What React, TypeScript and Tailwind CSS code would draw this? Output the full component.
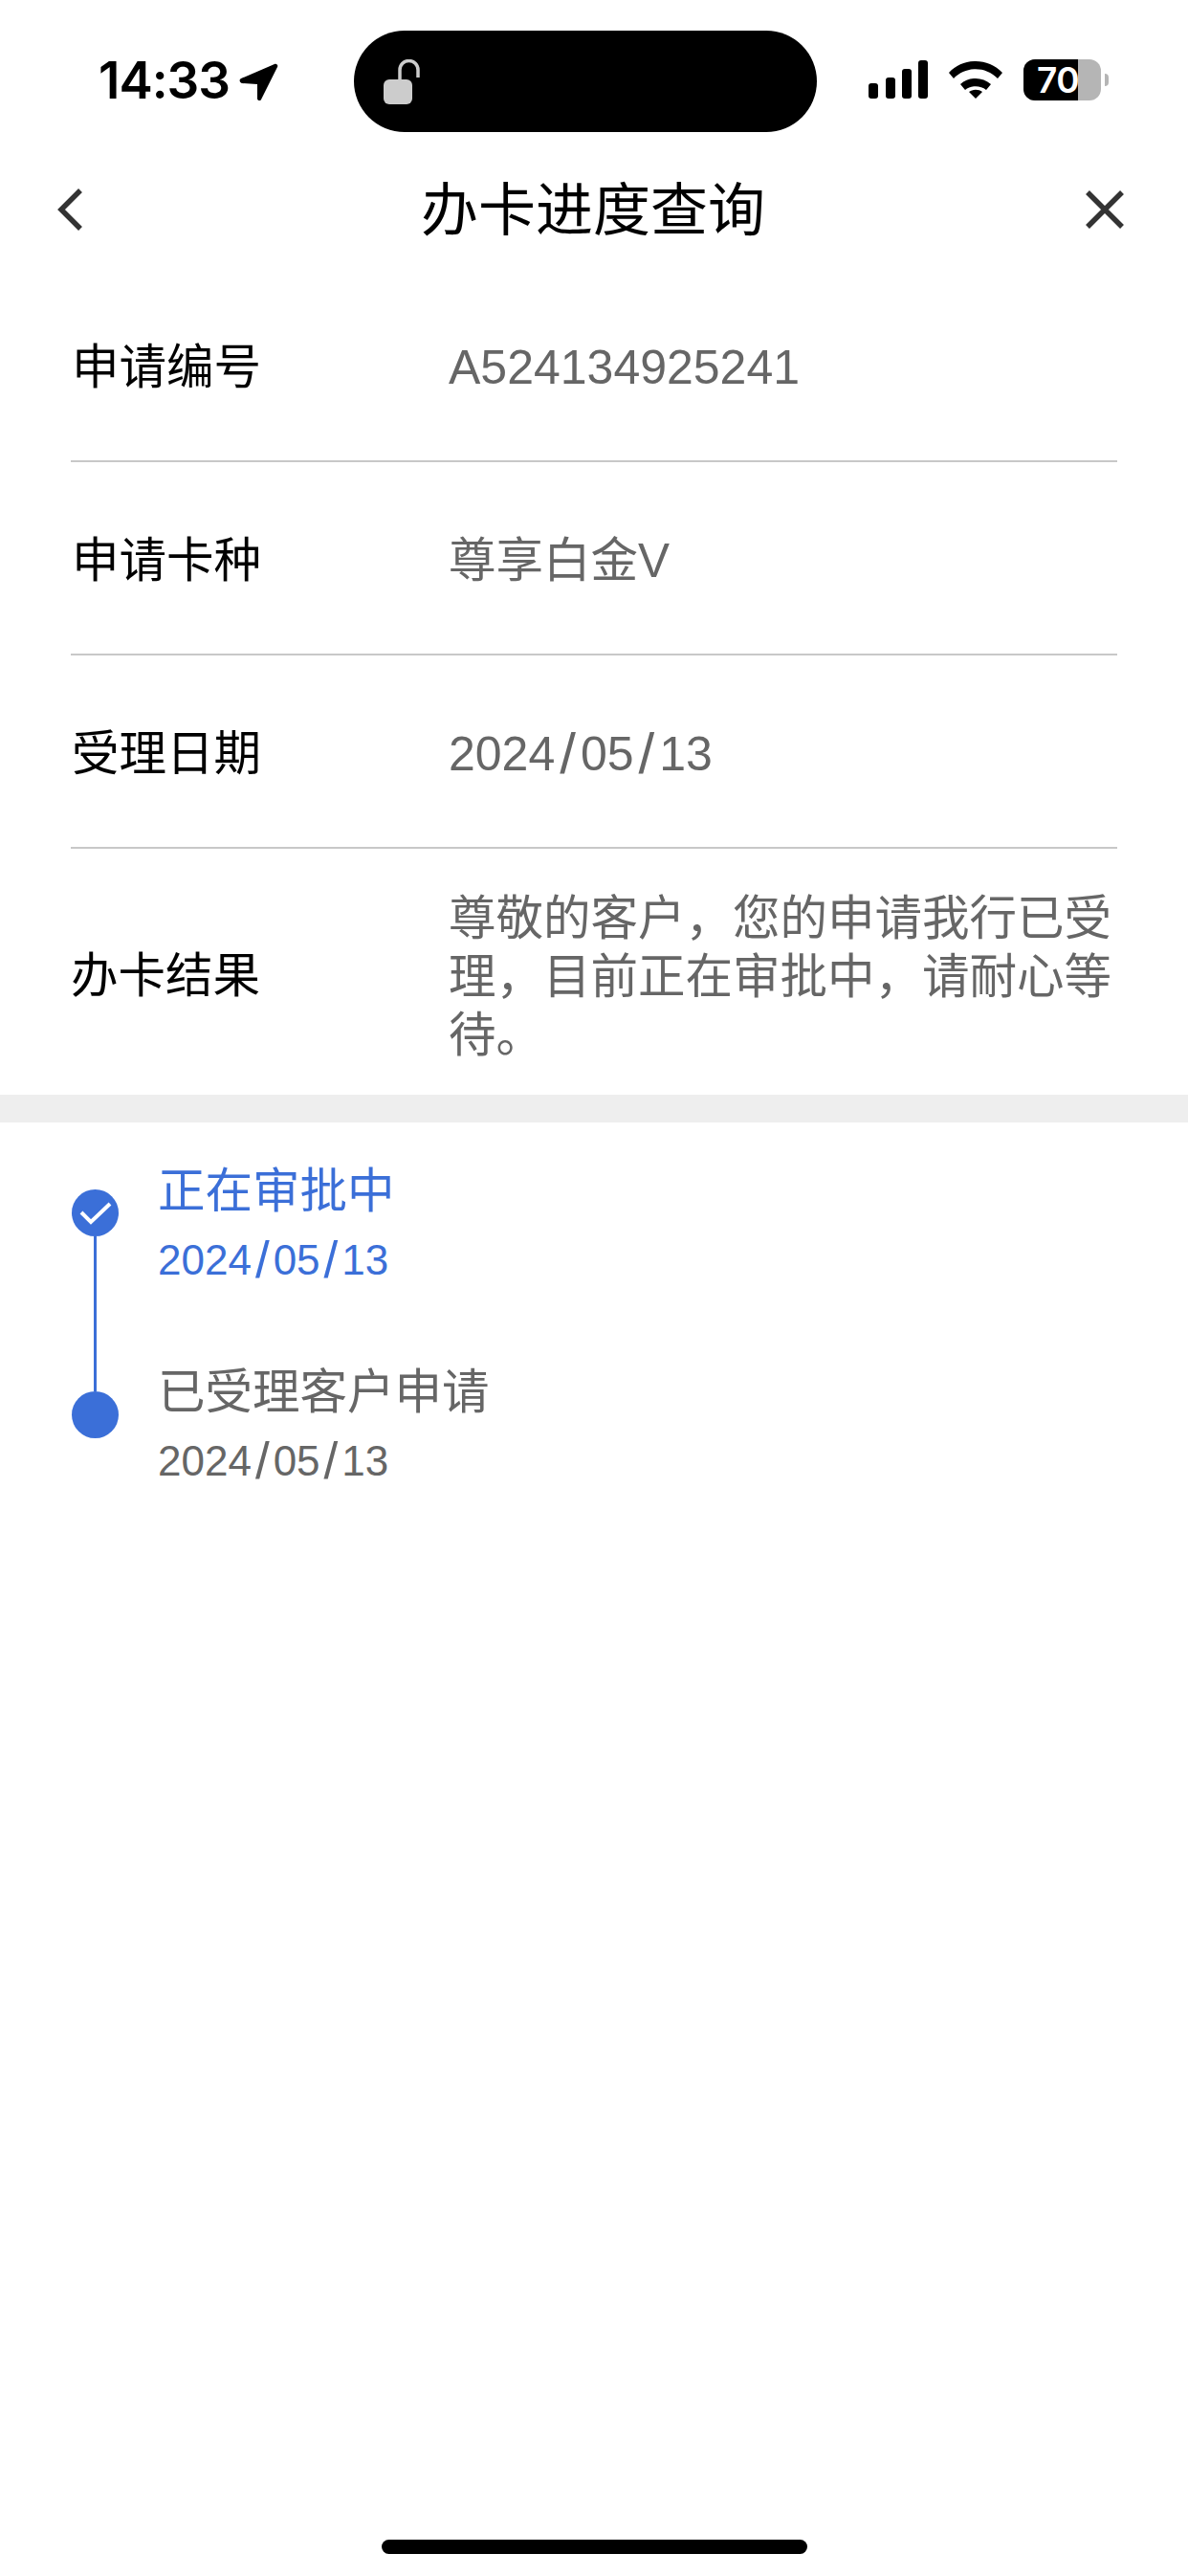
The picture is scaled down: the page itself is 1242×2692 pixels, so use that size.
import type { ReactNode } from "react";

const SANS = '"Liberation Sans","Noto Sans CJK SC",sans-serif';

function DateText({ slash }: { slash: string }) {
  return (
    <>
      2024<span className={slash}>/</span>05<span className={slash}>/</span>13
    </>
  );
}

function Row({ label, children, size = "text-[49.5px]" }: { label: string; children: ReactNode; size?: string }) {
  return (
    <div className="mx-[74px] flex h-[202px] items-center border-b-2 border-[#c8c8c8] pt-[7px]">
      <div className="w-[395px] shrink-0 pl-[1px] text-[49.5px] text-black">{label}</div>
      <div className={`${size} text-[#666666]`}>{children}</div>
    </div>
  );
}

export default function App() {
  return (
    <div className="flex h-[2692px] w-[1242px] flex-col overflow-hidden bg-white" style={{ fontFamily: SANS }}>
      <div className="flex h-[138px] items-start pl-[103px] pt-[32px]">
        <div className="flex h-[106px] items-center">
          <span className="w-[147px] font-['Inter'] text-[53px] font-semibold tracking-[-1px] text-black">14:33</span>
          <svg width="41" height="39" viewBox="0 0 41 39" className="shrink-0">
            <path d="M37 1 2 16c-2 1-2 4 1 5l16 1v15c0 2 3 3 4 1L40 4c1-2-1-4-3-3Z" fill="#000" />
          </svg>
          <div className="ml-[79px] flex h-[106px] w-[484px] shrink-0 items-center rounded-[53px] bg-black pl-[31px]">
            <svg width="38" height="47" viewBox="0 0 38 47">
              <rect x="0" y="21" width="30" height="26" rx="6" fill="#cccccc" />
              <path d="M17 21V11a9 9 0 0 1 19 0v8" fill="none" stroke="#cccccc" strokeWidth="3.5" />
            </svg>
          </div>
          <svg width="62" height="40" viewBox="0 0 62 40" className="mb-[4px] ml-[54px] shrink-0">
            <rect x="0" y="24" width="10" height="16" rx="3" fill="#000" />
            <rect x="18" y="18" width="10" height="22" rx="3" fill="#000" />
            <rect x="35" y="9" width="10" height="31" rx="3" fill="#000" />
            <rect x="52" y="0" width="10" height="40" rx="3" fill="#000" />
          </svg>
          <svg width="56" height="40" viewBox="0 0 56 40" className="mb-[4px] ml-[22px] shrink-0">
            <path d="M0 13C15-3 41-3 56 13l-5 6C38 6 18 6 5 19Z" fill="#000" />
            <path d="M12 25c9-8 23-8 32 0l-5 6c-6-5-16-5-22 0Z" fill="#000" />
            <path d="M28 40 21 33c4-3 10-3 14 0Z" fill="#000" />
          </svg>
          <div className="mb-[4px] ml-[22px] flex shrink-0 items-center">
            <div className="relative flex h-[43px] w-[81px] items-center overflow-hidden rounded-[12px] bg-[#b5b5b5]">
              <div className="h-full w-[57px] bg-black" />
              <span className="absolute left-[14px] top-0 font-['Inter'] text-[37px] font-semibold leading-[43px] tracking-[-0.5px] text-white">70</span>
            </div>
            <div className="ml-[4px] h-[13px] w-[4px] rounded-r-full bg-[#b5b5b5]" />
          </div>
        </div>
      </div>
      <div className="flex h-[143px] items-center justify-between pl-[60px] pr-[67px] pt-[22px]">
        <div className="w-[45px]">
          <svg width="26" height="44" viewBox="0 0 26 44" className="mt-[-3px]">
            <path d="M24 2 4 22l20 20" fill="none" stroke="#333333" strokeWidth="5.5" />
          </svg>
        </div>
        <span className="text-[60px] leading-none text-black">办卡进度查询</span>
        <div className="w-[40px]">
          <svg width="40" height="40" viewBox="0 0 40 40" className="mt-[-3px]">
            <path d="M2 2l36 36M38 2 2 38" fill="none" stroke="#333333" strokeWidth="5.5" />
          </svg>
        </div>
      </div>
      <Row label="申请编号" size="text-[50px]">A524134925241</Row>
      <Row label="申请卡种">尊享白金V</Row>
      <Row label="受理日期" size="text-[50px]">
        <DateText slash="mx-[5px] inline-block translate-y-[3px] text-[60px] leading-none" />
      </Row>
      <div className="mx-[74px] flex h-[257px] items-center pt-[9px]">
        <div className="w-[395px] shrink-0 text-[49.5px] text-black">办卡结果</div>
        <div className="text-[49.5px] leading-[61px] text-[#666666]">尊敬的客户，您的申请我行已受理，目前正在审批中，请耐心等待。</div>
      </div>
      <div className="h-[29px] bg-[#eeeeee]" />
      <div className="flex pl-[75px] pt-[42px]">
        <div className="mt-[28px] flex w-[49px] flex-col items-center">
          <div className="flex h-[49px] w-[49px] items-center justify-center rounded-full bg-[#3b6fd8]">
            <svg width="34" height="24" viewBox="0 0 34 24">
              <path d="M2 11l10 10L32 2" fill="none" stroke="#fff" strokeWidth="4" />
            </svg>
          </div>
          <div className="h-[162px] w-[3px] bg-[#3b6fd8]" />
          <div className="h-[49px] w-[49px] rounded-full bg-[#3b6fd8]" />
        </div>
        <div className="ml-[41px] flex flex-col">
          <div className="text-[49.5px] leading-[60px] text-[#3b6fd8]">正在审批中</div>
          <div className="mt-[12px] text-[44px] leading-[60px] text-[#3b6fd8]">
            <DateText slash="mx-[4px] inline-block translate-y-[3px] text-[53px] leading-none" />
          </div>
          <div className="mt-[78px] text-[49.5px] leading-[60px] text-[#666666]">已受理客户申请</div>
          <div className="mt-[12px] text-[44px] leading-[60px] text-[#666666]">
            <DateText slash="mx-[4px] inline-block translate-y-[3px] text-[53px] leading-none" />
          </div>
        </div>
      </div>
      <div className="mb-[23px] mt-auto h-[15px] w-[445px] self-center rounded-full bg-black" />
    </div>
  );
}
